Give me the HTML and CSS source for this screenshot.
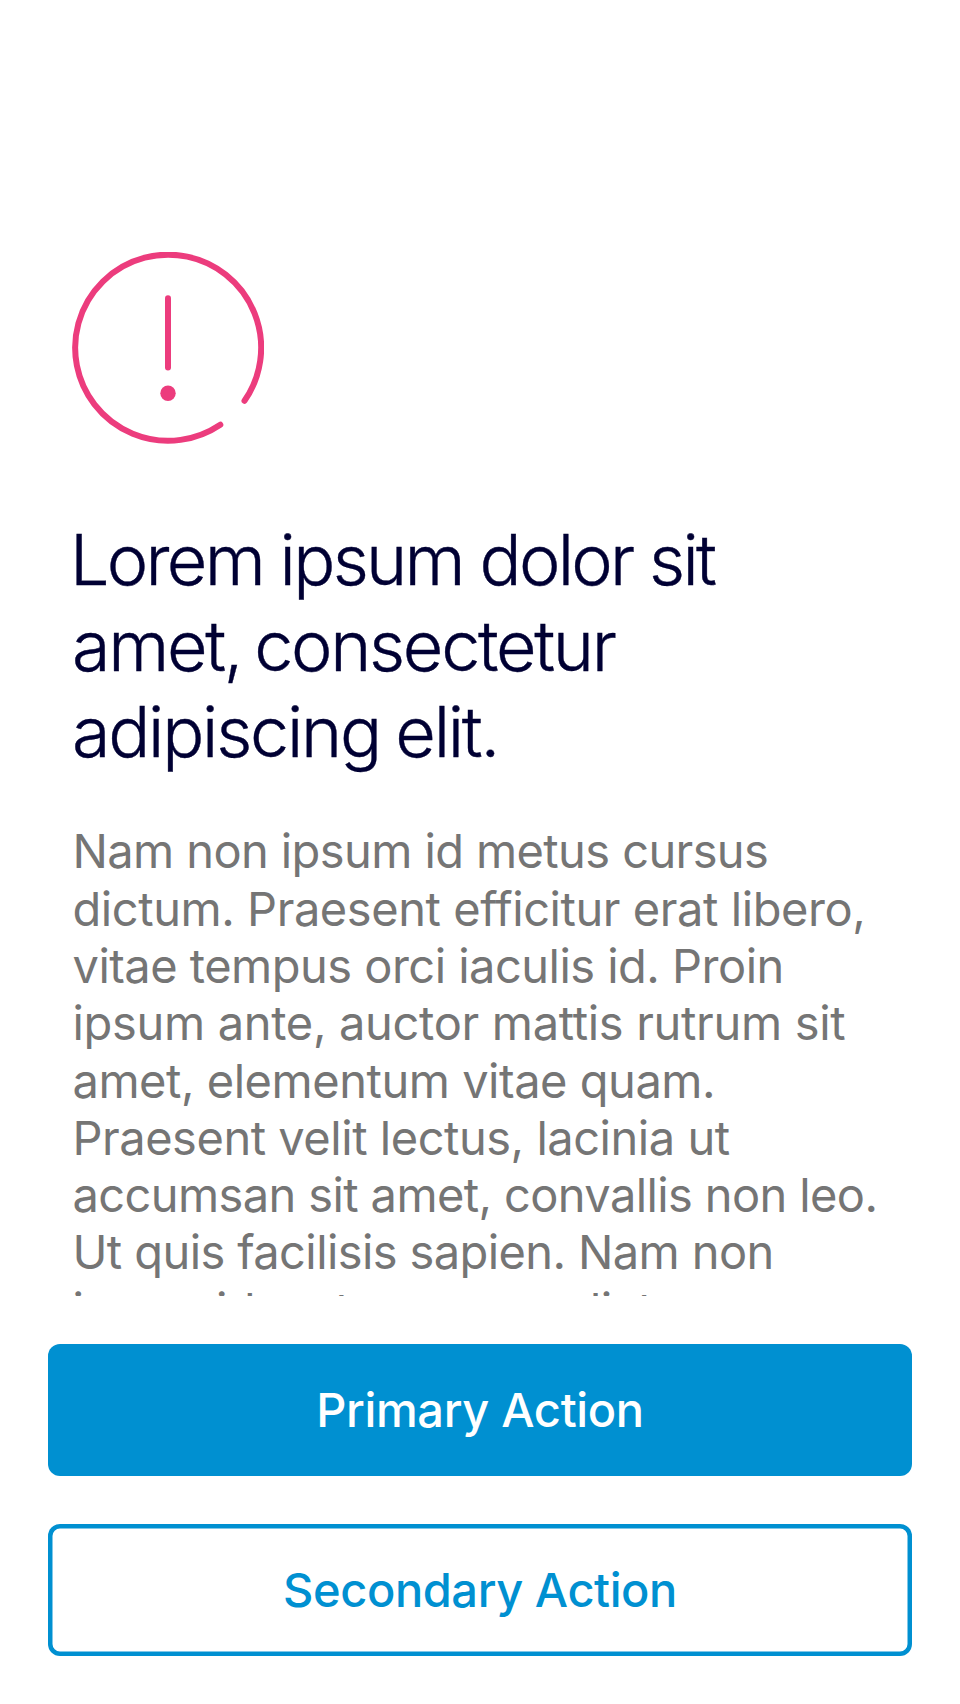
FILE: index.html
```html
<!DOCTYPE html>
<html lang="en">
<head>
<meta charset="utf-8">
<title>Feedback</title>
<link rel="stylesheet" href="styles.css">
</head>
<body>
<main class="screen">
<section class="content">
<svg class="icon" viewBox="0 0 192 192" fill="none" stroke="#ec3c7d" stroke-width="6" stroke-linecap="round"><path d="M148.300 172.700A93 93 0 1 1 172.500 148.800"/><path d="M96 46.300V115.500"/><circle cx="96" cy="141.300" r="7.700" fill="#ec3c7d" stroke="none"/></svg>
<h1 class="title"><span class="line t1">Lorem ipsum dolor sit</span><span class="line t2">amet, consectetur</span><span class="line t3">adipiscing elit.</span></h1>
<p class="description"><span class="line d1">Nam non ipsum id metus cursus</span><span class="line d2">dictum. Praesent efficitur erat libero,</span><span class="line d3">vitae tempus orci iaculis id. Proin</span><span class="line d4">ipsum ante, auctor mattis rutrum sit</span><span class="line d5">amet, elementum vitae quam.</span><span class="line d6">Praesent velit lectus, lacinia ut</span><span class="line d7">accumsan sit amet, convallis non leo.</span><span class="line d8">Ut quis facilisis sapien. Nam non</span><span class="line d9">ipsum id metus cursus dictum.</span></p>
</section>
<div class="actions"><button class="button primary">Primary Action</button><button class="button secondary">Secondary Action</button></div>
</main>
</body>
</html>
```
FILE: styles.css
```css
* { box-sizing: border-box; }
body { margin: 0; background: #fff; font-family: Inter, sans-serif; }
.screen { height: 1704px; display: flex; flex-direction: column; }
.content { height: 1296px; padding: 252px 0 0 72px; overflow: hidden; }
.icon { display: block; width: 192px; height: 192px; }
.title { margin: 73px 0 0; font-size: 70px; line-height: 85.8px; font-weight: 300; color: #000033; -webkit-text-stroke: 0.4px #000033; }
.line { display: block; white-space: nowrap; }
.t1 { letter-spacing: -2.72px; word-spacing: -0.4px; margin-left: -2px; }
.t2 { letter-spacing: -2.3px; word-spacing: -4.5px; }
.t3 { letter-spacing: -2.25px; word-spacing: -2px; }
.description { margin: 48px 0 0; font-size: 47px; line-height: 57.3px; color: #757575; }
.description .line { margin-left: 0.5px; }
.d1 { letter-spacing: -0.6px; }
.d2 { letter-spacing: -0.44px; }
.d3 { letter-spacing: -0.52px; }
.d4 { letter-spacing: -0.32px; }
.d5 { letter-spacing: -0.47px; }
.d6 { letter-spacing: -0.47px; }
.d7 { letter-spacing: -0.61px; }
.d8 { letter-spacing: -0.6px; }
.d9 { letter-spacing: -0.6px; }
.actions { display: flex; flex-direction: column; gap: 48px; padding: 48px 48px 0; }
.button { height: 132px; border: 0; border-radius: 12px; font: 500 47px Inter, sans-serif; padding: 0 0 2px; }
.primary { background: #0090d1; color: #fff; letter-spacing: -0.33px; }
.secondary { background: #fff; color: #0090d1; box-shadow: inset 0 0 0 4.5px #0090d1; letter-spacing: -0.42px; }
```
